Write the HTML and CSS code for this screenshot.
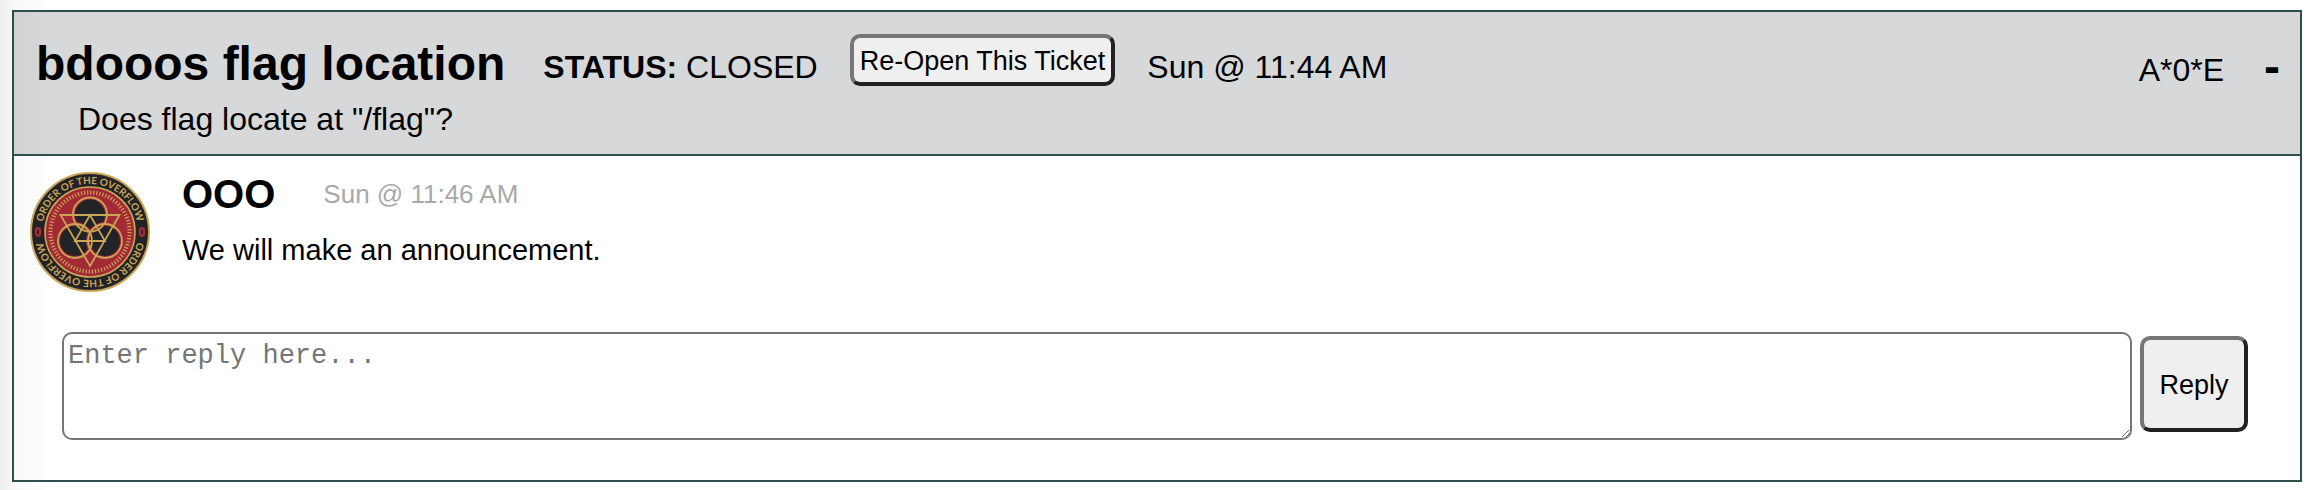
FILE: index.html
```
<!DOCTYPE html>
<html lang="en">
<head>
<meta charset="UTF-8" />
<meta name="viewport" content="width=device-width, initial-scale=1" />
<title>Tickets</title>
<link rel="stylesheet" href="styles.css">
</head>
<body>
  <section class="ticket">
    <header class="ticket-header">
      <div class="ticket-row">
        <h1>bdooos flag location</h1>
        <span class="status"><b>STATUS:</b> CLOSED</span>
        <button type="button" class="reopen">Re-Open This Ticket</button>
        <time>Sun @ 11:44 AM</time>
        <span class="owner">A*0*E</span>
        <button type="button" class="toggle" aria-label="Collapse ticket">-</button>
      </div>
      <p class="description">Does flag locate at "/flag"?</p>
    </header>

    <article class="message">
      <svg class="avatar" viewBox="0 0 120 120" aria-hidden="true">
        <defs>
          <path id="ring" d="M12 60a48 48 0 0 1 96 0a48 48 0 0 1 -96 0" />
        </defs>
        <circle cx="60" cy="60" r="59" fill="#222326" stroke="#c9a558" stroke-width="2" />
        <circle cx="60" cy="60" r="45" fill="#a32a35" stroke="#c9a558" stroke-width="1.6" />
        <circle cx="60" cy="60" r="39.5" fill="none" stroke="#c9a558" stroke-width="4" stroke-dasharray="1.2 1.9" />
        <g fill="#222326" stroke="#a32a35" stroke-width="4">
          <circle cx="60" cy="42.5" r="17" />
          <circle cx="45" cy="69" r="17" />
          <circle cx="75" cy="69" r="17" />
        </g>
        <g fill="none" stroke="#c9a558" stroke-width="1.8">
          <circle cx="60" cy="42.5" r="17" />
          <circle cx="45" cy="69" r="17" />
          <circle cx="75" cy="69" r="17" />
          <path d="M30.500 43H89.500L60 94Z" />
          <path d="M60 43L45 69H75Z" />
        </g>
        <g fill="none" stroke="#a32a35" stroke-width="2.4">
          <ellipse cx="8" cy="60" rx="2.200" ry="3.800" />
          <ellipse cx="112" cy="60" rx="2.200" ry="3.800" />
        </g>
        <g class="ring-text">
          <text><textPath href="#ring" startOffset="25%">ORDER OF THE OVERFLOW</textPath></text>
          <text><textPath href="#ring" startOffset="75%">ORDER OF THE OVERFLOW</textPath></text>
        </g>
      </svg>
      <div class="message-body">
        <div class="message-meta">
          <h2>OOO</h2>
          <time>Sun @ 11:46 AM</time>
        </div>
        <p>We will make an announcement.</p>
      </div>
    </article>

    <form class="reply-form">
      <textarea name="reply" placeholder="Enter reply here..." aria-label="Reply"></textarea>
      <button type="submit">Reply</button>
    </form>
  </section>
</body>
</html>
```

FILE: styles.css
```
* {
  box-sizing: border-box;
}

body {
  margin: 10px 16px 8px 12px;
  font-family: Helvetica, Arial, "Liberation Sans", sans-serif;
  font-size: 32px;
  color: #000;
  background: linear-gradient(to right, #ececec, #f9f9f9 14px, #fff 56px);
}

h1, h2, p {
  margin: 0;
}

h1 {
  font-size: 48px;
  line-height: 60px;
}

button {
  padding: 2px 6px 0;
  font-family: inherit;
  font-size: 27px;
  color: #000;
  background: #efefef;
  border: 4px solid;
  border-color: #767676 #212121 #212121 #767676;
  border-radius: 10px;
  cursor: pointer;
}

.ticket {
  border: 2px solid #2f4f4f;
}

.ticket-header {
  padding: 22px 20px 16px 22px;
  border-bottom: 2px solid #2f4f4f;
  background: linear-gradient(to right, #d0d1d3, #d7d8da 36px);
}

.ticket-row {
  display: flex;
  align-items: flex-start;
  height: 66px;
}

.status, .ticket-row time {
  line-height: 66px;
}

.status {
  margin-left: 38px;
}

.reopen {
  height: 52px;
  margin: 0 32px;
}

.owner {
  margin-left: auto;
  line-height: 72px;
}

.toggle {
  margin-left: 40px;
  padding: 0;
  border: 0;
  background: none;
  font-size: 48px;
  font-weight: bold;
  line-height: 66px;
}

.description {
  padding-left: 42px;
  line-height: 38px;
}

.message {
  display: flex;
  gap: 32px;
  padding: 16px;
}

.avatar {
  width: 120px;
  height: 120px;
}

.ring-text {
  font-family: Lato, sans-serif;
  font-size: 10px;
  font-weight: bold;
  fill: #c9a558;
  text-anchor: middle;
}

.message-meta {
  display: flex;
  align-items: center;
  gap: 48px;
}

.message-meta time {
  font-size: 26px;
  color: #a9a9a9;
}

h2 {
  font-size: 40px;
  line-height: 44px;
}

.message p {
  margin-top: 16px;
  font-size: 29px;
  line-height: 36px;
}

.reply-form {
  display: flex;
  align-items: flex-start;
  gap: 8px;
  padding: 24px 52px 40px 48px;
}

textarea {
  flex: 1;
  height: 108px;
  padding: 4px;
  border: 2px solid #767676;
  border-radius: 10px;
  background: transparent;
  font-family: "Courier New", "Liberation Mono", monospace;
  font-size: 27px;
  line-height: 36px;
  resize: both;
}

textarea::placeholder {
  color: #757575;
}

.reply-form button {
  width: 108px;
  height: 96px;
  margin-top: 4px;
}
```
